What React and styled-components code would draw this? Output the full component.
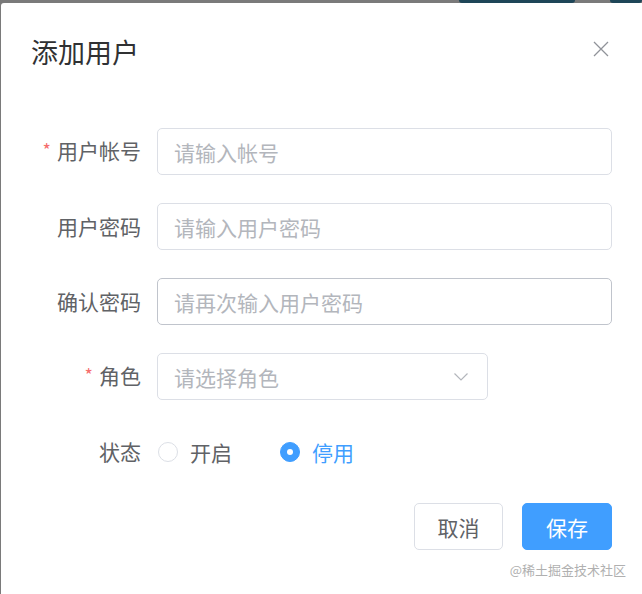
import React from "react"
import styled, { createGlobalStyle } from "styled-components"

const GlobalStyle = createGlobalStyle`
  html, body {
    margin: 0;
    padding: 0;
    background: #7a7a7a;
    font-family: "Noto Sans CJK SC", "Noto Sans", Arial, sans-serif;
  }
`

const Page = styled.div`
  width: 642px;
  height: 594px;
  overflow: hidden;
  display: flex;
  flex-direction: column;
`

const TopStrip = styled.div`
  height: 3px;
  display: flex;
  flex-shrink: 0;
`

const StripPart = styled.div`
  width: ${(p) => p.w}px;
  background: ${(p) => (p.dark ? "#1e4658" : "#7a7a7a")};
  border-radius: 0 0 3px 3px;
`

const Dialog = styled.div`
  position: relative;
  flex: 1;
  margin-left: 1px;
  background: #fff;
  border-top-left-radius: 3px;
  padding: 33px 30px 0 0;
`

const Header = styled.div`
  display: flex;
  align-items: center;
  justify-content: space-between;
  height: 32px;
  padding-left: 30px;
  margin-bottom: 60px;
`

const Title = styled.h2`
  margin: 0;
  font-size: 27px;
  font-weight: 400;
  line-height: 32px;
  color: #303133;
`

const Close = styled.button`
  border: 0;
  background: none;
  padding: 0;
  width: 16px;
  height: 16px;
  margin-right: 3px;
  margin-top: -6px;
  display: flex;
  cursor: pointer;
`

const Form = styled.form`
  display: flex;
  flex-direction: column;
  gap: 28px;
`

const Row = styled.div`
  display: flex;
  align-items: center;
  height: 47px;
`

const Label = styled.label`
  width: 156px;
  box-sizing: border-box;
  padding-right: 16px;
  text-align: right;
  font-size: 21px;
  line-height: 24px;
  color: #606266;
  flex-shrink: 0;
  margin-top: -2px;
`

const Star = styled.span`
  color: #f56c6c;
  font-size: 18px;
  margin-right: 6px;
  position: relative;
  top: -2px;
`

const InputBox = styled.div`
  position: relative;
  width: ${(p) => p.w || 455}px;
  height: 47px;
  box-sizing: border-box;
  border: 1px solid ${(p) => (p.hover ? "#c0c4cc" : "#dcdfe6")};
  border-radius: 5px;
  display: flex;
  align-items: center;
  padding: 0 16px;
`

const Input = styled.input`
  border: 0;
  outline: none;
  flex: 1;
  min-width: 0;
  padding: 0;
  font-family: inherit;
  font-size: 21px;
  color: #606266;
  background: transparent;
  &::placeholder {
    color: #b3b6bc;
  }
`

const Radios = styled.div`
  display: flex;
  align-items: center;
  gap: 48px;
  padding-left: 1px;
`

const RadioItem = styled.label`
  display: flex;
  align-items: center;
  gap: 12px;
  font-size: 21px;
  line-height: 24px;
  color: ${(p) => (p.checked ? "#409eff" : "#606266")};
`

const Dot = styled.span`
  width: 20px;
  height: 20px;
  box-sizing: border-box;
  border-radius: 50%;
  border: 1px solid ${(p) => (p.checked ? "#409eff" : "#dcdfe6")};
  background: ${(p) => (p.checked ? "#409eff" : "#fff")};
  display: flex;
  align-items: center;
  justify-content: center;
  &::after {
    content: "";
    width: 6px;
    height: 6px;
    border-radius: 50%;
    background: #fff;
    display: ${(p) => (p.checked ? "block" : "none")};
  }
`

const Footer = styled.div`
  display: flex;
  justify-content: flex-end;
  gap: 19px;
  margin-top: 28px;
`

const Button = styled.button`
  height: 47px;
  width: ${(p) => (p.primary ? 90 : 89)}px;
  box-sizing: border-box;
  border-radius: 5px;
  border: 1px solid ${(p) => (p.primary ? "#409eff" : "#dcdfe6")};
  background: ${(p) => (p.primary ? "#409eff" : "#fff")};
  color: ${(p) => (p.primary ? "#fff" : "#606266")};
  font-family: inherit;
  font-size: 21px;
  padding: 0;
  cursor: pointer;
`

const Watermark = styled.div`
  position: absolute;
  right: 16px;
  bottom: 16px;
  font-size: 13px;
  line-height: 16px;
  color: #b0b0b0;
`

const CloseIcon = () => (
  <svg width="16" height="16" viewBox="0 0 16 16">
    <path d="M1 1 L15 15 M15 1 L1 15" stroke="#909399" strokeWidth="1.3" fill="none" />
  </svg>
)

const Chevron = styled.svg`
  position: absolute;
  right: 19px;
  top: 19px;
`

export default function App() {
  return (
    <Page>
      <GlobalStyle />
      <TopStrip>
        <StripPart w={459} />
        <StripPart w={116} dark />
        <StripPart w={35} />
        <StripPart w={32} dark />
      </TopStrip>
      <Dialog>
        <Header>
          <Title>添加用户</Title>
          <Close aria-label="关闭">
            <CloseIcon />
          </Close>
        </Header>
        <Form>
          <Row>
            <Label>
              <Star>*</Star>用户帐号
            </Label>
            <InputBox>
              <Input placeholder="请输入帐号" />
            </InputBox>
          </Row>
          <Row>
            <Label>用户密码</Label>
            <InputBox>
              <Input placeholder="请输入用户密码" type="password" />
            </InputBox>
          </Row>
          <Row>
            <Label>确认密码</Label>
            <InputBox hover>
              <Input placeholder="请再次输入用户密码" type="password" />
            </InputBox>
          </Row>
          <Row>
            <Label>
              <Star>*</Star>角色
            </Label>
            <InputBox w={331}>
              <Input placeholder="请选择角色" readOnly />
              <Chevron width="14" height="8" viewBox="0 0 14 8">
                <path d="M0.5 0.5 L7 7 L13.5 0.5" stroke="#b3b6bc" strokeWidth="1.2" fill="none" />
              </Chevron>
            </InputBox>
          </Row>
          <Row>
            <Label>状态</Label>
            <Radios>
              <RadioItem>
                <Dot />
                开启
              </RadioItem>
              <RadioItem checked>
                <Dot checked />
                停用
              </RadioItem>
            </Radios>
          </Row>
        </Form>
        <Footer>
          <Button>取消</Button>
          <Button primary>保存</Button>
        </Footer>
        <Watermark>@稀土掘金技术社区</Watermark>
      </Dialog>
    </Page>
  )
}
